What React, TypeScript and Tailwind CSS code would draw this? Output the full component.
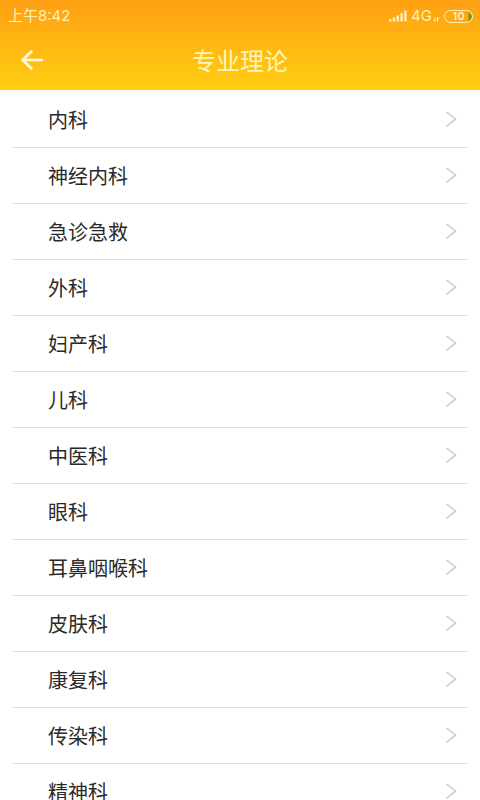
const departments = [
  '内科',
  '神经内科',
  '急诊急救',
  '外科',
  '妇产科',
  '儿科',
  '中医科',
  '眼科',
  '耳鼻咽喉科',
  '皮肤科',
  '康复科',
  '传染科',
  '精神科',
];

const StatusBar = () => (
  <div className="flex h-8 items-center justify-between pl-2 pr-[7px] font-['Inter','Noto_Sans_CJK_SC',sans-serif] text-[#fff0b8]">
    <span className="text-[15px] leading-5">上午8:42</span>
    <div className="flex items-center gap-1">
      <svg className="h-3 w-[18px]" viewBox="0 0 18 12" fill="currentColor">
        <rect x="0" y="9" width="2.4" height="2.5" />
        <rect x="3.8" y="7.5" width="2.4" height="4" />
        <rect x="7.6" y="5.5" width="2.4" height="6" />
        <rect x="11.4" y="3" width="2.4" height="8.5" />
        <rect x="15.2" y="0.5" width="2.4" height="11" />
      </svg>
      <div className="flex items-end">
        <span className="text-[15px] leading-5">4G</span>
        <svg className="mb-1 h-2 w-2" viewBox="0 0 8 8" fill="none" stroke="currentColor" strokeWidth="1">
          <path d="M3 3.5v4M1.8 6l1.2 1.5M5.5 7.5v-4M6.8 5L5.5 3.5" />
        </svg>
      </div>
      <div className="relative flex h-[13px] w-[29px] items-center justify-center rounded-full border border-current font-semibold">
        <span className="text-[11px] leading-none">10</span>
        <svg className="absolute right-0 top-0 h-[11px] w-1" viewBox="0 0 4 11" fill="#6f9a18">
          <path d="M0.5 1Q3.6 2 3.6 5.5T0.5 10Z" />
        </svg>
      </div>
    </div>
  </div>
);

export default function App() {
  return (
    <div className="flex h-screen flex-col bg-white font-['Noto_Sans_CJK_SC',sans-serif]">
      <header className="shrink-0 bg-linear-to-b from-[#ffa012] to-[#ffce12]">
        <StatusBar />
        <div className="grid h-[58px] grid-cols-[64px_1fr_64px] items-center">
          <button type="button" aria-label="返回" className="flex h-14 items-center justify-center text-[#fffbe0]">
            <svg
              className="h-6 w-6"
              viewBox="0 0 24 24"
              fill="none"
              stroke="currentColor"
              strokeWidth="2.6"
              strokeLinecap="round"
              strokeLinejoin="round"
            >
              <path d="M22 11H2.5M11.5 2.5L2.5 11l9 8.5" />
            </svg>
          </button>
          <h1 className="pb-0.5 text-center text-2xl text-[#fff5b8]">专业理论</h1>
        </div>
      </header>

      <ul className="min-h-0 flex-1 overflow-y-auto px-[13px] pt-0.5 [scrollbar-width:none]">
        {departments.map((name) => (
          <li key={name} className="h-14 border-b border-[#dedede]">
            <button type="button" className="flex h-full w-full items-center justify-between pl-[35px] pr-2.5 text-left">
              <span className="text-xl text-[#2a2a2a]">{name}</span>
              <svg className="h-4 w-3" viewBox="0 0 12 16" fill="none" stroke="#cccccc" strokeWidth="1.5">
                <path d="M1.5 0L10.5 7.2l-9 7.2" />
              </svg>
            </button>
          </li>
        ))}
      </ul>
    </div>
  );
}
